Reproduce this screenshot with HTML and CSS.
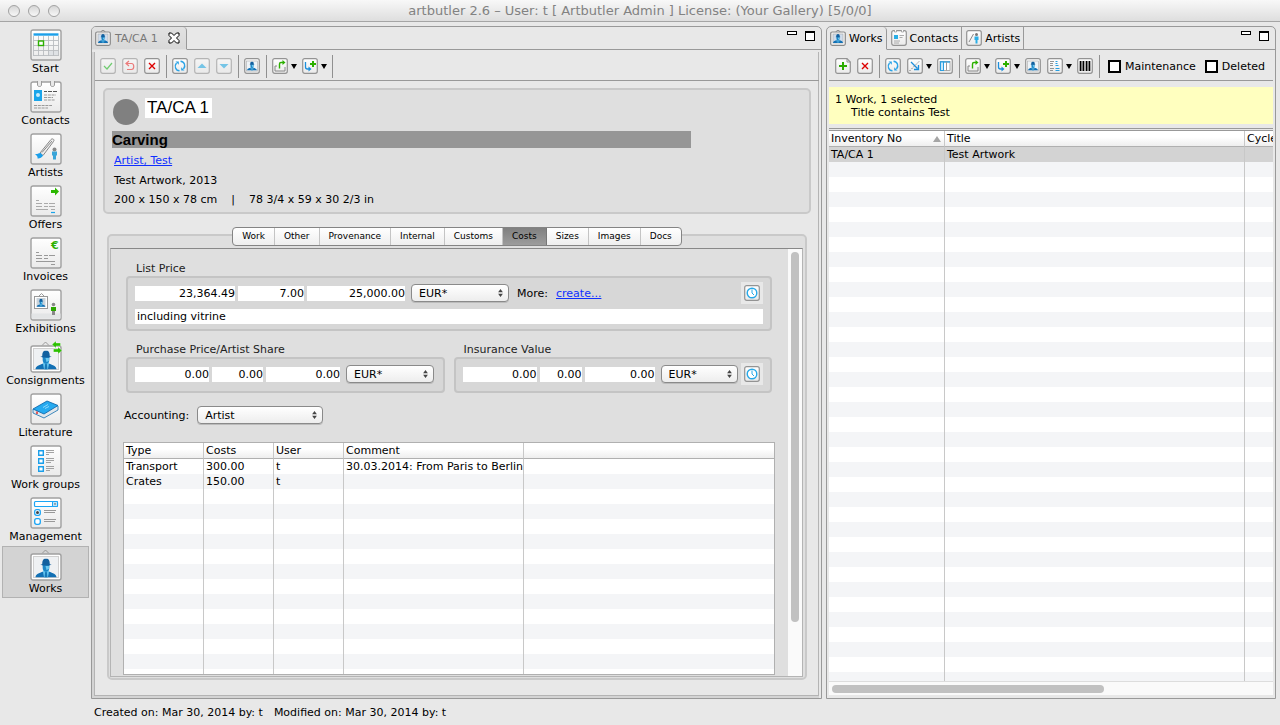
FILE: index.html
```html
<!DOCTYPE html>
<html lang="en">
<head>
    <meta charset="UTF-8">
    <meta name="viewport" content="width=device-width,initial-scale=1.0">
    <title>artbutler 2.6</title>
    <link rel="stylesheet" href="styles.css">
</head>
<body>
<!--icon library-->
<svg class="defs" width="0" height="0" aria-hidden="true">
    <defs>
        <linearGradient id="paper" x1="0" y1="0" x2="0" y2="1">
            <stop offset="0" stop-color="#fff"/><stop offset="1" stop-color="#eaeaea"/>
        </linearGradient>
    </defs>
    <symbol id="tile" viewBox="0 0 32 32"><rect x="1" y="1" width="30" height="30" rx="2" fill="url(#paper)" stroke="#a0a0a0" stroke-width="1.4"/></symbol>
    <symbol id="man" viewBox="0 0 22 20">
        <path d="M0 20c0-3.500 3-4 7-6h8c4 2 7 2.500 7 6z" fill="#1270b4"/>
        <path d="M8 12h6v3l-1 5H9l-1-5z" fill="#62c3ee"/>
        <path d="M10.200 14h1.600l.8 6H9.400z" fill="#1878b8"/>
        <path d="M7.500 6h7v4c0 2-1.500 4-3.500 4s-3.500-2-3.500-4z" fill="#1c86c6"/>
        <path d="M10.500 8H14v3l-2.500 1z" fill="#6bc9f0"/>
        <path d="M7 6c0-4 1-6 4-6s4 2 4 6l2 .5c-3 1.200-9 1.200-12 0z" fill="#11609f"/>
    </symbol>
    <symbol id="frame" viewBox="0 0 32 32">
        <path d="M12 4.500L15.500 1 19 4.500" fill="none" stroke="#888" stroke-width=".8"/>
        <rect x="1" y="5" width="30" height="26" rx="2" fill="#fff" stroke="#a0a0a0" stroke-width="1.400"/>
        <rect x="3.500" y="7.500" width="25" height="21" fill="#eff1f3" stroke="#d0d0d0"/>
        <use href="#man" x="5" y="9.500" width="22" height="19"/>
    </symbol>
    <symbol id="btn" viewBox="0 0 16 16"><rect x=".7" y=".7" width="14.600" height="14.600" rx="2" fill="url(#paper)" stroke="#939393" stroke-width="1.200"/></symbol>
    <symbol id="i-check" viewBox="0 0 16 16"><use href="#btn"/><path d="M4 8l3 3 5-6" fill="none" stroke="#2b2" stroke-width="1.200"/></symbol>
    <symbol id="i-undo" viewBox="0 0 16 16"><use href="#btn"/><path d="M7 3L4 5.500 7 8M4.500 5.500h5c3 0 3 6 0 6H5" fill="none" stroke="#e33" stroke-width="1.200"/></symbol>
    <symbol id="i-delete" viewBox="0 0 16 16"><use href="#btn"/><path d="M5 5l6 6M11 5l-6 6" stroke="#d00" stroke-width="1.400"/></symbol>
    <symbol id="i-refresh" viewBox="0 0 16 16"><use href="#btn"/><path d="M7.500 12.800C3.500 12.500 2 8 4.500 5M8.500 3.200c4 .3 5.500 4.800 3 7.800" fill="none" stroke="#2aa3e6" stroke-width="1.400"/><path d="M3.500 3.500h3.300v3.300zM12.500 12.500H9.200V9.200z" fill="#2aa3e6"/></symbol>
    <symbol id="i-up" viewBox="0 0 16 16"><use href="#btn"/><path d="M3.500 10L8 5.500l4.500 4.500z" fill="#2aaee6"/></symbol>
    <symbol id="i-down" viewBox="0 0 16 16"><use href="#btn"/><path d="M3.500 6L8 10.500 12.500 6z" fill="#2aaee6"/></symbol>
    <symbol id="i-work" viewBox="0 0 16 16"><use href="#btn"/><rect x="2.500" y="3" width="11" height="10" fill="#eef3f7" stroke="#aaa" stroke-width=".6"/><use href="#man" x="3" y="3.500" width="10" height="9"/></symbol>
    <symbol id="i-export" viewBox="0 0 16 16"><use href="#btn"/><path d="M5 8H3v5h10V9" fill="none" stroke="#888"/><path d="M7.500 10.500V6c0-1 .5-1.500 1.500-1.500h2" fill="none" stroke="#2cb000" stroke-width="1.400"/><path d="M10.500 2l3 2.500-3 2.500z" fill="#2cb000"/></symbol>
    <symbol id="i-import" viewBox="0 0 16 16"><use href="#btn"/><path d="M3.500 4v5c0 1.500 1 2 2 2h2" fill="none" stroke="#1c8fdc" stroke-width="1.300"/><path d="M6.500 8.500L9.500 11l-3 2.500z" fill="#1c8fdc"/><path d="M11 3v6M8 6h6" stroke="#2cb000" stroke-width="2"/></symbol>
    <symbol id="i-new" viewBox="0 0 16 16"><path d="M.7 2.500C.7 1.500 1.500.7 2.500.7H12l3.300 3.300v9.500c0 1-.8 1.800-1.800 1.800h-11c-1 0-1.800-.8-1.800-1.800z" fill="url(#paper)" stroke="#939393" stroke-width="1.200"/><path d="M12 .7V4h3.300" fill="none" stroke="#939393"/><path d="M8 4v8M4 8h8" stroke="#2cac00" stroke-width="2"/></symbol>
    <symbol id="i-relate" viewBox="0 0 16 16"><use href="#btn"/><path d="M4 4l6.500 6.500M11.500 7v4.500H7" fill="none" stroke="#1c8fdc" stroke-width="1.300"/><path d="M2.500 13L13 2.500" stroke="#777" stroke-dasharray="1.500 1.500"/></symbol>
    <symbol id="i-columns" viewBox="0 0 16 16"><use href="#btn"/><rect x="3" y="3.500" width="10" height="9" fill="#fff" stroke="#999" stroke-width=".8"/><path d="M3 4h10" stroke="#2a9fe0" stroke-width="1.400"/><path d="M9.500 4v8.500" stroke="#999"/><rect x="3.500" y="4" width="3" height="8.500" fill="#c9e9fb" stroke="#2a9fe0"/></symbol>
    <symbol id="i-list" viewBox="0 0 16 16"><use href="#btn"/><path d="M3 3.500h4M3 5.500h3M3 7.500h3M3 10.500h4M3 12.500h3" stroke="#888" stroke-width=".9"/><path d="M8.500 3.500h2M8.500 5.500h2M8.500 7.500h3M8.500 10.500h4M8.500 12.500h4" stroke="#2a9fe0" stroke-width="1.100"/></symbol>
    <symbol id="i-barcode" viewBox="0 0 16 16"><use href="#btn"/><path d="M3.500 3v10M6.500 3v10M9.500 3v10M12.500 3v10" stroke="#000" stroke-width="1.600"/><path d="M5 3v10M11 3v10" stroke="#000" stroke-width=".5"/></symbol>
    <symbol id="i-clock" viewBox="0 0 16 16"><use href="#btn"/><circle cx="8" cy="8" r="4.800" fill="#fff" stroke="#27a9e8" stroke-width="1.400"/><path d="M8 4.500V8l2 2" fill="none" stroke="#27a9e8"/></symbol>
    <symbol id="t-work" viewBox="0 0 16 16"><path d="M5.500 2L8 0l2.500 2" fill="none" stroke="#888"/><rect x=".7" y="2" width="14.600" height="13.300" rx="1.500" fill="#f4f4f4" stroke="#8a8a8a" stroke-width="1.200"/><rect x="3" y="4" width="10" height="9" fill="#cfdcec" stroke="#aaa" stroke-width=".6"/><use href="#man" x="3" y="4" width="10" height="9"/></symbol>
    <symbol id="t-contact" viewBox="0 0 16 16"><use href="#btn"/><path d="M3.500 0v2h2V0M10.500 0v2h2V0" fill="#fff" stroke="#999" stroke-width=".8"/><rect x="3" y="5" width="4" height="4" fill="#2aaee6"/><path d="M8.500 5.500H13M8.500 7.500h3M3 11h6M3 13h5" stroke="#999" stroke-width=".8"/></symbol>
    <symbol id="t-artist" viewBox="0 0 16 16"><use href="#btn"/><path d="M3 12l4.500-8" stroke="#888"/><circle cx="10.500" cy="4.500" r="1.500" fill="#777"/><path d="M8.500 6.500h4V10h-1v3.500h-2V10h-1z" fill="#2aaee6"/></symbol>
    <symbol id="updown" viewBox="0 0 6 10"><path d="M0 4l3-4 3 4zM0 6l3 4 3-4z" fill="#444"/></symbol>
</svg>

<header class="titlebar">
    <span class="lights"><i></i><i></i><i></i></span>
    <h1>artbutler 2.6 – User: t [ Artbutler Admin ] License: (Your Gallery) [5/0/0]</h1>
</header>

<div class="workspace">
    <!--sidebar-->
    <nav class="sidebar">
        <button type="button">
            <svg viewBox="0 0 32 32"><use href="#tile"/><path d="M18.500 21.500h10v5h-10z" fill="#dfe2e5"/><path d="M3.500 5.500h25" stroke="#1ba0ea" stroke-width="2.400"/><path d="M3.500 11.500h25M3.500 16.500h25M3.500 21.500h25M3.500 26.500h25M3.500 7v20M8.500 7v20M13.500 7v20M18.500 7v20M23.500 7v20M28.500 7v20" stroke="#b9bcc0" stroke-width=".9"/><rect x="8.500" y="12" width="5" height="4.500" fill="#fff" stroke="#2cb000" stroke-width="1.400"/></svg>
            Start
        </button>
        <button type="button">
            <svg viewBox="0 0 32 32"><use href="#tile"/><path d="M7.500 0v4c0 2 4 2 4 0V0M20.500 0v4c0 2 4 2 4 0V0" fill="#e8e8e8" stroke="#999"/><rect x="4" y="9" width="8" height="11" fill="#1ba5ea"/><circle cx="8" cy="14" r="2" fill="#c9ecfb"/><path d="M14 10.500h3M18 10.500h4M23 10.500h4" stroke="#555" stroke-width="1.200"/><path d="M14 14h12M14 16.500h9M14 19h11M4 24.500h18M4 27h14" stroke="#999" stroke-dasharray="3 .8"/></svg>
            Contacts
        </button>
        <button type="button">
            <svg viewBox="0 0 32 32"><use href="#tile"/><path d="M10 20L21 6.500c1.500-1.500 4 0 2.500 2L13 22.500z" fill="#eee" stroke="#888"/><path d="M12 19.500L22 8" stroke="#888"/><path d="M5 21c3 .5 4-1.500 5.500-1l2.500 2.500c-1 2-4 3.500-5.500 3 .5-1.500-.5-3-2.500-4.500z" fill="#1b9fea"/><circle cx="24.500" cy="16.500" r="2" fill="#888"/><path d="M22 18.500h5v4h-1v4h-3v-4h-1z" fill="#3aa5d8"/></svg>
            Artists
        </button>
        <button type="button">
            <svg viewBox="0 0 32 32"><use href="#tile"/><path d="M21 5h4V2.500L29 6.500l-4 4V8h-4z" fill="#2cb800"/><path d="M6 15.500h3M6 18.500h6M14 18.500h4M19 18.500h6M6 21.500h6M14 21.500h4M19 21.500h6M6 24.500h12M21 24.500h4" stroke="#aaa"/><path d="M21 27.500h4" stroke="#1ba5ea" stroke-width="1.200"/></svg>
            Offers
        </button>
        <button type="button">
            <svg viewBox="0 0 32 32"><use href="#tile"/><text x="21" y="12" class="euro">€</text><path d="M6 15.500h3M6 18.500h6M14 18.500h4M19 18.500h6M6 21.500h6M14 21.500h4M6 24.500h19M21 27.500h4" stroke="#999"/></svg>
            Invoices
        </button>
        <button type="button">
            <svg viewBox="0 0 32 32"><use href="#tile"/><path d="M1.500 24.500h29v5h-29z" fill="#e3e5e6"/><path d="M9 7l2.500-2.500L14 7" fill="none" stroke="#999"/><rect x="4.500" y="7.500" width="13" height="12" fill="#fff" stroke="#999"/><rect x="6.500" y="9" width="9" height="9" fill="#c9d3db"/><use href="#man" x="6.500" y="9.500" width="9" height="8.500"/><circle cx="23.500" cy="15.500" r="1.800" fill="#888"/><path d="M21 18h5v4h-5z" fill="#2ca800"/><path d="M22 22h3v4h-3z" fill="#888"/></svg>
            Exhibitions
        </button>
        <button type="button">
            <svg viewBox="0 0 32 32"><use href="#frame"/><path d="M22 3.500L26 0v2h4.500v3H26v2zM32 9.500L28 6v2h-4.500v3H28v2z" fill="#2cc000" stroke="#fff" stroke-width=".3"/></svg>
            Consignments
        </button>
        <button type="button">
            <svg viewBox="0 0 32 32"><use href="#tile"/><path d="M3 16v4l11 5 14-8v-4" fill="#e2e6ea" stroke="#126fae" stroke-width=".8"/><path d="M3 16L17 8l11 4.500L14 21z" fill="#25aaf0" stroke="#0e6aae" stroke-width=".9"/><path d="M13 14.500l5-3M15 15.500l4-2" stroke="#8fd8fb"/><path d="M7 18.500v2.500" stroke="#d22" stroke-width="1.400"/></svg>
            Literature
        </button>
        <button type="button">
            <svg viewBox="0 0 32 32"><use href="#tile"/><path d="M8.700 5.700h4.600v4.600H8.700zM8.700 13.700h4.600v4.600H8.700zM8.700 21.700h4.600v4.600H8.700z" fill="#fff" stroke="#1b9fea" stroke-width="1.400"/><path d="M16 5.500h8M16 7.500h8M16 9.500h3M16 13.500h8M16 15.500h8M16 17.500h5M16 21.500h8M16 23.500h8M16 25.500h4" stroke="#999" stroke-width=".9"/></svg>
            Work groups
        </button>
        <button type="button">
            <svg viewBox="0 0 32 32"><use href="#tile"/><rect x="4.500" y="4.500" width="23" height="5" rx="1" fill="#fff" stroke="#1ba5f5" stroke-width="1.200"/><path d="M22.500 4.500h5v5h-5z" fill="#bde4fa" stroke="#1ba5f5"/><path d="M24 6.500h2l-1 1.500z" fill="#444"/><rect x="4.700" y="12.700" width="5.600" height="5.600" rx="2" fill="#fff" stroke="#1ba5f5" stroke-width="1.300"/><circle cx="7.500" cy="15.500" r="1.500" fill="#444"/><rect x="4.700" y="21.700" width="5.600" height="5.600" rx="2" fill="#fff" stroke="#1ba5f5" stroke-width="1.300"/><path d="M14 13.500h12M14 15.500h11M14 22.500h12M14 24.500h11" stroke="#999"/></svg>
            Management
        </button>
        <button type="button" class="on">
            <svg viewBox="0 0 32 32"><use href="#frame"/></svg>
            Works
        </button>
    </nav>

    <!--editor-->
    <main class="view editor">
        <div class="view_tabs">
            <span class="view_tab on">
                <svg class="icon"><use href="#t-work"/></svg>TA/CA 1
                <button type="button" class="close" aria-label="Close"><svg viewBox="0 0 12 12"><path d="M1 1h2.500L6 3.500 8.500 1H11v2.500L8.500 6 11 8.500V11H8.500L6 8.500 3.500 11H1V8.500L3.500 6 1 3.500z" fill="#fff" stroke="#000"/></svg></button>
            </span>
            <span class="view_ctrl"><i class="min"></i><i class="max"></i></span>
        </div>
        <div class="editor_body">
            <div class="toolbar">
                <button type="button" class="off" aria-label="Save"><svg class="icon"><use href="#i-check"/></svg></button>
                <button type="button" class="off" aria-label="Revert"><svg class="icon"><use href="#i-undo"/></svg></button>
                <button type="button" aria-label="Delete"><svg class="icon"><use href="#i-delete"/></svg></button>
                <i class="sep"></i>
                <button type="button" aria-label="Refresh"><svg class="icon"><use href="#i-refresh"/></svg></button>
                <button type="button" class="off" aria-label="Previous"><svg class="icon"><use href="#i-up"/></svg></button>
                <button type="button" class="off" aria-label="Next"><svg class="icon"><use href="#i-down"/></svg></button>
                <i class="sep"></i>
                <button type="button" aria-label="Work"><svg class="icon"><use href="#i-work"/></svg></button>
                <i class="sep"></i>
                <button type="button" class="drop" aria-label="Export"><svg class="icon"><use href="#i-export"/></svg></button>
                <button type="button" class="drop" aria-label="Add to"><svg class="icon"><use href="#i-import"/></svg></button>
                <i class="sep"></i>
            </div>
            <section class="summary">
                <div class="summary_no">
                    <i class="dot"></i>
                    <input type="text" value="TA/CA 1" aria-label="Inventory No">
                </div>
                <h2>Carving</h2>
                <p><a href="#">Artist, Test</a></p>
                <p>Test Artwork, 2013</p>
                <p>200 x 150 x 78 cm<span class="bar">|</span>78 3/4 x 59 x 30 2/3 in</p>
            </section>

            <section class="folder">
                <div class="segments">
                    <button type="button">Work</button>
                    <button type="button">Other</button>
                    <button type="button">Provenance</button>
                    <button type="button">Internal</button>
                    <button type="button">Customs</button>
                    <button type="button" class="on">Costs</button>
                    <button type="button">Sizes</button>
                    <button type="button">Images</button>
                    <button type="button">Docs</button>
                </div>
                <div class="folder_page">
                    <form class="costs">
                        <div class="groups">
                            <fieldset>
                                <legend>List Price</legend>
                                <div class="group">
                                    <div class="line">
                                        <input type="text" class="num w100" value="23,364.49" aria-label="Net">
                                        <input type="text" class="num w66" value="7.00" aria-label="VAT">
                                        <input type="text" class="num w98" value="25,000.00" aria-label="Gross">
                                        <span class="select w98"><select aria-label="Currency"><option>EUR*</option></select><svg><use href="#updown"/></svg></span>
                                        <span class="more">More:</span>
                                        <a href="#">create...</a>
                                        <button type="button" class="clock" aria-label="History"><svg class="icon"><use href="#i-clock"/></svg></button>
                                    </div>
                                    <input type="text" class="note" value="including vitrine" aria-label="Note">
                                </div>
                            </fieldset>
                            <div class="pair">
                                <fieldset>
                                    <legend>Purchase Price/Artist Share</legend>
                                    <div class="group">
                                        <div class="line">
                                            <input type="text" class="num w74" value="0.00" aria-label="Net">
                                            <input type="text" class="num w51" value="0.00" aria-label="VAT">
                                            <input type="text" class="num w74" value="0.00" aria-label="Gross">
                                            <span class="select w88"><select aria-label="Currency"><option>EUR*</option></select><svg><use href="#updown"/></svg></span>
                                        </div>
                                    </div>
                                </fieldset>
                                <fieldset>
                                    <legend>Insurance Value</legend>
                                    <div class="group">
                                        <div class="line">
                                            <input type="text" class="num w74" value="0.00" aria-label="Net">
                                            <input type="text" class="num w42" value="0.00" aria-label="VAT">
                                            <input type="text" class="num w70" value="0.00" aria-label="Gross">
                                            <span class="select w77"><select aria-label="Currency"><option>EUR*</option></select><svg><use href="#updown"/></svg></span>
                                            <button type="button" class="clock" aria-label="History"><svg class="icon"><use href="#i-clock"/></svg></button>
                                        </div>
                                    </div>
                                </fieldset>
                            </div>
                        </div>
                        <div class="accounting">
                            <label for="accounting">Accounting:</label>
                            <span class="select w126"><select id="accounting"><option>Artist</option></select><svg><use href="#updown"/></svg></span>
                        </div>
                        <div class="grid_box costs_grid">
                            <table class="grid">
                                <colgroup><col class="w80"><col class="w70"><col class="w70"><col class="w180"><col></colgroup>
                                <thead>
                                    <tr><th>Type</th><th>Costs</th><th>User</th><th>Comment</th><th></th></tr>
                                </thead>
                                <tbody>
                                    <tr><td>Transport</td><td>300.00</td><td>t</td><td>30.03.2014: From Paris to Berlin</td><td></td></tr>
                                    <tr class="even"><td>Crates</td><td>150.00</td><td>t</td><td></td><td></td></tr>
                                    <tr class="filler"><td></td><td></td><td></td><td></td><td></td></tr>
                                </tbody>
                            </table>
                        </div>
                    </form>
                    <div class="vscroll"><i></i></div>
                </div>
            </section>
        </div>
    </main>

    <!--works list-->
    <aside class="view browser">
        <div class="view_tabs">
            <button type="button" class="view_tab on"><svg class="icon"><use href="#t-work"/></svg>Works</button>
            <button type="button" class="view_tab"><svg class="icon"><use href="#t-contact"/></svg>Contacts</button>
            <button type="button" class="view_tab"><svg class="icon"><use href="#t-artist"/></svg>Artists</button>
            <span class="view_ctrl"><i class="min"></i><i class="max"></i></span>
        </div>
        <div class="toolbar">
            <button type="button" aria-label="New"><svg class="icon"><use href="#i-new"/></svg></button>
            <button type="button" aria-label="Delete"><svg class="icon"><use href="#i-delete"/></svg></button>
            <i class="sep"></i>
            <button type="button" aria-label="Refresh"><svg class="icon"><use href="#i-refresh"/></svg></button>
            <button type="button" class="drop" aria-label="Relations"><svg class="icon"><use href="#i-relate"/></svg></button>
            <button type="button" aria-label="Columns"><svg class="icon"><use href="#i-columns"/></svg></button>
            <i class="sep"></i>
            <button type="button" class="drop" aria-label="Export"><svg class="icon"><use href="#i-export"/></svg></button>
            <button type="button" class="drop" aria-label="Add to"><svg class="icon"><use href="#i-import"/></svg></button>
            <button type="button" aria-label="Work"><svg class="icon"><use href="#i-work"/></svg></button>
            <button type="button" class="drop" aria-label="Lists"><svg class="icon"><use href="#i-list"/></svg></button>
            <button type="button" aria-label="Barcode"><svg class="icon"><use href="#i-barcode"/></svg></button>
            <i class="sep"></i>
            <label class="check"><input type="checkbox">Maintenance</label>
            <label class="check"><input type="checkbox">Deleted</label>
        </div>
        <div class="filter">
            <p>1 Work, 1 selected</p>
            <p class="indent">Title contains Test</p>
        </div>
        <div class="grid_box works_grid">
            <table class="grid">
                <colgroup><col class="w116"><col><col class="w28"></colgroup>
                <thead>
                    <tr><th>Inventory No<i class="sort"></i></th><th>Title</th><th>Cycle</th></tr>
                </thead>
                <tbody>
                    <tr class="selected"><td>TA/CA 1</td><td>Test Artwork</td><td></td></tr>
                    <tr class="filler"><td></td><td></td><td></td></tr>
                </tbody>
            </table>
        </div>
        <div class="hscroll"><i></i></div>
    </aside>
</div>

<footer class="status">
    <span>Created on: Mar 30, 2014 by: t</span>
    <span>Modified on: Mar 30, 2014 by: t</span>
</footer>
</body>
</html>
```
FILE: styles.css
```css
/*base*/
*{box-sizing:border-box;}
html,body{height:100%;}
body{margin:0;display:flex;flex-direction:column;overflow:hidden;color:#000;background:#e8e8e8;font:11px/15px "Lucida Grande","DejaVu Sans",sans-serif;}
h1,h2,p,fieldset,legend{margin:0;padding:0;border:0;}
button,input,select{margin:0;padding:0;border:0;border-radius:0;background:none;color:inherit;font:inherit;}
a{color:#0f2fff;text-decoration:underline;}
svg{display:block;flex:none;}
.defs{position:absolute;}
.icon{width:16px;height:16px;}

/*title bar*/
.titlebar{flex:none;display:flex;align-items:center;height:22px;padding:0 8px;border-bottom:1px solid #a5a5a5;background:linear-gradient(#f8f8f8,#dedede);}
.titlebar h1{flex:1;padding-right:52px;text-align:center;font-size:13px;font-weight:normal;color:#828282;}
.lights{display:flex;gap:8px;}
.lights i{width:12px;height:12px;border:1px solid #a2a2a2;border-radius:50%;background:linear-gradient(#d6d6d6,#f8f8f8);}

.workspace{flex:1;min-height:0;display:flex;gap:4px;padding:4px 4px 0 2px;}

/*sidebar*/
.sidebar{flex:none;width:87px;margin-right:-2px;}
.sidebar button{display:flex;flex-direction:column;align-items:center;width:100%;height:52px;padding-top:2px;border:1px solid transparent;white-space:nowrap;}
.sidebar svg{width:32px;height:32px;}
.sidebar .on{background:#d3d3d3;border-color:#b2b2b2;}
.euro{font:bold 11px "DejaVu Sans",sans-serif;fill:#2cb000;}

/*views*/
.view{min-width:0;display:flex;flex-direction:column;border:1px solid #999;border-radius:5px 5px 0 0;}
.editor{flex:729;}
.browser{flex:444;padding:0 2px 3px;}
.view_tabs{flex:none;display:flex;height:23px;}
.browser .view_tabs{margin:0 -2px;}
.view_tab{display:flex;align-items:center;gap:3px;padding:0 3px 0 4px;border-right:1px solid #999;border-bottom:1px solid #999;}
.view_tab.on{padding-left:3px;border-bottom-color:transparent;border-radius:4px 4px 0 0;}
.editor .view_tab{gap:4px;padding-right:6px;color:#777;background:linear-gradient(#e2e2e2,#d8d8d8);}
.close{margin-left:6px;}
.close svg{width:12px;height:12px;}
.view_ctrl{flex:1;display:flex;justify-content:flex-end;gap:8px;padding:4px 6px 0 0;border-bottom:1px solid #999;}
.min{width:10px;height:4px;border:1px solid #000;background:#fff;}
.max{width:10px;height:10px;border:1px solid #000;border-top-width:2px;background:#fff;}
.editor_body{flex:1;min-height:0;display:flex;flex-direction:column;margin:2px 2px 0 0;padding:0 8px 16px 9px;border:solid #d4d4d4;border-width:0 0 2px 2px;box-shadow:inset 1px -1px #b4b4b4,inset -1px 0 #b4b4b4;}

/*toolbars*/
.toolbar{flex:none;display:flex;align-items:center;gap:6px;height:29px;border-bottom:1px solid #999;}
.editor .toolbar{margin:0 -8px 7px;padding-left:5px;}
.browser .toolbar{height:31px;margin-bottom:6px;padding:2px 0 0 6px;}
.toolbar button{display:flex;align-items:center;}
.toolbar .off{opacity:.6;}
.drop:after{content:"";width:0;margin:0 -1px 0 3px;border:solid transparent;border-width:5px 3px 0;border-top-color:#000;}
.sep{width:1px;height:23px;margin-right:-1px;background:#909090;}
.check{display:flex;align-items:center;gap:4px;margin-left:3px;white-space:nowrap;}
.check input{appearance:none;width:13px;height:13px;border:2px solid #000;background:#fff;}

/*work summary*/
.summary{flex:none;height:126px;padding:8px 8px 0 7px;border:2px solid #c9c9c9;border-radius:5px;background:#dfdfdf;}
.summary_no{display:flex;gap:6px;height:33px;}
.dot{width:26px;height:26px;margin:1px 0 0 1px;border-radius:50%;background:#808080;}
.summary input{width:67px;height:20px;padding-left:2px;background:#fff;font:17px/20px "Liberation Sans",Arial,sans-serif;}
.summary h2{width:84%;background:#969696;font:bold 15px/17px "Liberation Sans",Arial,sans-serif;}
.summary p{padding-left:2px;margin-top:4px;}
.summary h2+p{margin:5px 0;}
.bar{margin:0 14px;}

/*tab folder*/
.folder{flex:1;min-height:0;display:flex;flex-direction:column;margin:20px 4px 0;border:2px solid #c9c9c9;border-radius:5px;background:#dfdfdf;}
.segments{flex:none;display:flex;align-self:center;height:19px;margin:-9px 0 2px;border:1px solid #848484;border-radius:4px;background:linear-gradient(#fff,#eee);overflow:hidden;font-size:9px;}
.segments button{padding:0 9px;border-right:1px solid #c4c4c4;}
.segments button:last-child{border:0;}
.segments .on{background:linear-gradient(#808080,#9c9c9c);border-color:#777;}
.folder_page{flex:1;min-height:0;display:flex;margin:0 2px 1px 1px;border:1px solid #b4b4b4;border-top-color:#888;}
.costs{flex:1;min-width:0;display:flex;flex-direction:column;padding:12px 13px 1px 12px;}
.groups{margin:0 3px;}
legend{padding-left:10px;color:#222;}
.group{padding:4px 7px 5px;border:2px solid #c4c4c4;border-radius:4px;background:#d7d7d7;}
.line{display:flex;align-items:center;gap:3px;height:22px;}
.line input,.note{height:15px;background:#fff;}
.num{text-align:right;}
.note{display:block;width:100%;margin:5px 0 0;padding-left:2px;}
.select{position:relative;margin-left:3px;}
.select select{appearance:none;width:100%;height:18px;padding-left:7px;border:1px solid #8a8a8a;border-radius:4px;background:linear-gradient(#fff,#ededed);box-shadow:0 1px #bbb;}
.select svg{position:absolute;right:6px;top:5px;width:5px;height:8px;pointer-events:none;}
.more{margin:0 5px;}
.clock{margin-left:auto;padding:3px;background:#e8e8e8;}
.pair{display:flex;gap:9px;margin-top:11px;}
.pair fieldset{flex:1;min-width:0;}
.pair .group{height:36px;}
.accounting{display:flex;align-items:center;margin:13px 0 18px;padding-left:1px;}
.accounting .select{margin-left:8px;}
.vscroll{flex:none;width:14px;padding:3px;background:#fafafa;}
.vscroll i{display:block;width:8px;height:88%;border-radius:4px;background:#c1c1c1;}

/*grids*/
.grid_box{flex:1;min-height:0;overflow:hidden;background:#fff;}
.costs_grid{border:1px solid #b0b0b0;}
.works_grid{border-top:1px solid #999;box-shadow:0 -1px #e8e8e8,0 -2px #999;}
.grid{width:100%;height:100%;table-layout:fixed;border-collapse:separate;border-spacing:0;}
.grid th{position:relative;height:16px;padding:0 0 0 2px;border-bottom:1px solid #b0b0b0;background:linear-gradient(#fff 40%,#eee);text-align:left;font-weight:normal;line-height:15px;white-space:nowrap;}
.grid td{height:15px;padding:0 0 0 2px;white-space:nowrap;overflow:hidden;}
.grid th,.grid td{border-right:1px solid #c8c8c8;}
.grid th:last-child,.grid td:last-child{border-right:0;}
.grid .even td{background:#f4f5f7;}
.grid .selected td{background:#d3d3d3;}
.grid .filler td{height:auto;background:repeating-linear-gradient(#fff 0 15px,#f4f5f7 15px 30px);}
.works_grid .filler td{background:repeating-linear-gradient(#f4f5f7 0 15px,#fff 15px 30px);}
.sort{position:absolute;right:3px;top:5px;border:solid transparent;border-width:0 4px 6px;border-bottom-color:#a5a5a5;}

/*browser*/
.filter{flex:none;height:37px;margin-bottom:6px;padding:6px;background:#ffffbf;line-height:13px;}
.filter .indent{padding-left:16px;}
.hscroll{flex:none;height:14px;padding:3px;border-top:1px solid #ddd;background:#fafafa;}
.hscroll i{display:block;width:62%;height:8px;border-radius:4px;background:#c1c1c1;}

/*status*/
.status{flex:none;display:flex;gap:11px;height:26px;padding:6px 94px;}

/*widths*/
.w28{width:28px;}
.w42{width:42px;}
.w51{width:51px;}
.w66{width:66px;}
.w70{width:70px;}
.w74{width:74px;}
.w77{width:77px;}
.w80{width:80px;}
.w88{width:88px;}
.w98{width:98px;}
.w100{width:100px;}
.w116{width:116px;}
.w126{width:126px;}
.w180{width:180px;}
```
